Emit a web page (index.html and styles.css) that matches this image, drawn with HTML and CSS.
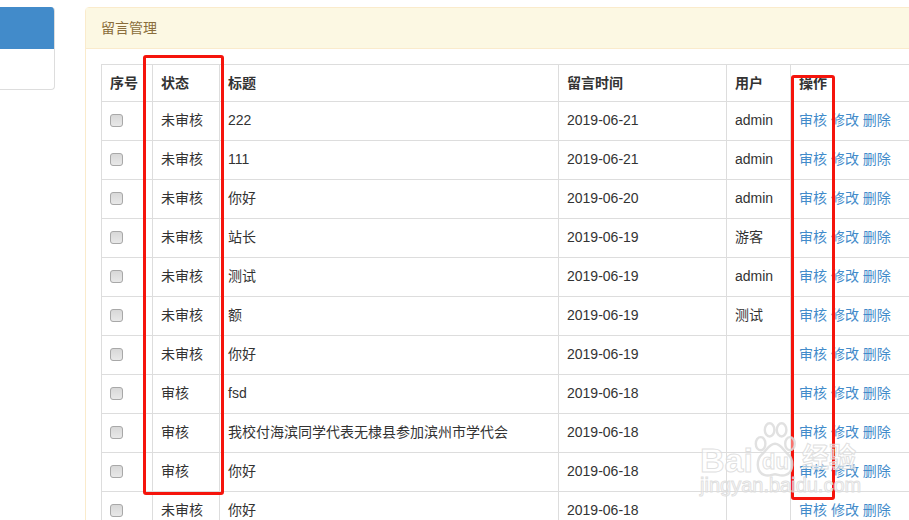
FILE: index.html
```html
<!DOCTYPE html>
<html lang="zh-CN">
<head>
<meta charset="utf-8">
<title>留言管理</title>
<link rel="stylesheet" href="styles.css">
</head>
<body>
<div class="page">
  <aside class="side-panel">
    <div class="side-head"></div>
    <div class="side-body"></div>
  </aside>
  <main class="panel">
    <div class="panel-head">留言管理</div>
    <div class="panel-body">
      <table class="grid">
        <colgroup>
          <col class="c1"><col class="c2"><col class="c3"><col class="c4"><col class="c5"><col class="c6">
        </colgroup>
        <thead>
          <tr><th>序号</th><th>状态</th><th>标题</th><th>留言时间</th><th>用户</th><th>操作</th></tr>
        </thead>
        <tbody>
          <tr><td><input type="checkbox"></td><td>未审核</td><td>222</td><td>2019-06-21</td><td>admin</td><td><a>审核</a> <a>修改</a> <a>删除</a></td></tr>
          <tr><td><input type="checkbox"></td><td>未审核</td><td>111</td><td>2019-06-21</td><td>admin</td><td><a>审核</a> <a>修改</a> <a>删除</a></td></tr>
          <tr><td><input type="checkbox"></td><td>未审核</td><td>你好</td><td>2019-06-20</td><td>admin</td><td><a>审核</a> <a>修改</a> <a>删除</a></td></tr>
          <tr><td><input type="checkbox"></td><td>未审核</td><td>站长</td><td>2019-06-19</td><td>游客</td><td><a>审核</a> <a>修改</a> <a>删除</a></td></tr>
          <tr><td><input type="checkbox"></td><td>未审核</td><td>测试</td><td>2019-06-19</td><td>admin</td><td><a>审核</a> <a>修改</a> <a>删除</a></td></tr>
          <tr><td><input type="checkbox"></td><td>未审核</td><td>额</td><td>2019-06-19</td><td>测试</td><td><a>审核</a> <a>修改</a> <a>删除</a></td></tr>
          <tr><td><input type="checkbox"></td><td>未审核</td><td>你好</td><td>2019-06-19</td><td></td><td><a>审核</a> <a>修改</a> <a>删除</a></td></tr>
          <tr><td><input type="checkbox"></td><td>审核</td><td>fsd</td><td>2019-06-18</td><td></td><td><a>审核</a> <a>修改</a> <a>删除</a></td></tr>
          <tr><td><input type="checkbox"></td><td>审核</td><td>我校付海滨同学代表无棣县参加滨州市学代会</td><td>2019-06-18</td><td></td><td><a>审核</a> <a>修改</a> <a>删除</a></td></tr>
          <tr><td><input type="checkbox"></td><td>审核</td><td>你好</td><td>2019-06-18</td><td></td><td><a>审核</a> <a>修改</a> <a>删除</a></td></tr>
          <tr><td><input type="checkbox"></td><td>未审核</td><td>你好</td><td>2019-06-18</td><td></td><td><a>审核</a> <a>修改</a> <a>删除</a></td></tr>
        </tbody>
      </table>
    </div>
  </main>
</div>
<div class="mark mark-status"></div>
<div class="mark mark-action"></div>
<div class="watermark">
  <svg class="paw" width="42" height="56" viewBox="0 0 70 93" aria-hidden="true">
    <g fill="#fff" fill-opacity=".4" stroke="#dcdcdc" stroke-opacity=".85" stroke-width="4">
      <ellipse cx="11" cy="36" rx="8" ry="11"/>
      <ellipse cx="26" cy="13" rx="8" ry="11"/>
      <ellipse cx="46" cy="13" rx="8" ry="11"/>
      <ellipse cx="60" cy="36" rx="8" ry="11"/>
      <path d="M35 36c-10 0-14 11-22 18-9 8-10 29 4 34 8 3 13-1 18-1s10 4 18 1c14-5 13-26 4-34-8-7-12-18-22-18z"/>
    </g>
  </svg>
  <span class="wm-bai">Bai</span><span class="wm-du">du</span><span class="wm-cn">经验</span>
  <div class="wm-url">jingyan.baidu.com</div>
</div>
</body>
</html>
```

FILE: styles.css
```css
html, body {
  margin: 0;
  height: 520px;
  overflow: hidden;
  background: #fff;
}
body {
  position: relative;
  font: 14px/22px "Liberation Sans", "Noto Sans CJK SC", sans-serif;
  color: #333;
}
.page {
  display: flex;
  align-items: flex-start;
  gap: 30px;
  width: 1240px;
  margin-left: -200px;
  padding-top: 7px;
}
.side-panel {
  flex: 0 0 255px;
  height: 83px;
  box-sizing: border-box;
  border: 1px solid #ddd;
  border-top: 0;
  border-radius: 4px;
  overflow: hidden;
}
.side-head {
  height: 42px;
  background: #428bca;
}
.panel {
  flex: 0 0 955px;
  border: 1px solid #faebcc;
  border-radius: 4px;
  box-sizing: border-box;
}
.panel-head {
  height: 41px;
  box-sizing: border-box;
  padding: 10px 15px;
  line-height: 20px;
  background: #fcf8e3;
  border-bottom: 1px solid #faebcc;
  color: #8a6d3b;
}
.panel-body {
  padding: 15px;
}
.grid {
  border-collapse: collapse;
  table-layout: fixed;
  width: 900px;
}
.c1 { width: 51px; }
.c2 { width: 67px; }
.c3 { width: 339px; }
.c4 { width: 168px; }
.c5 { width: 64px; }
.grid th, .grid td {
  border: 1px solid #ddd;
  text-align: left;
  height: 22px;
  white-space: nowrap;
  vertical-align: middle;
}
.grid td {
  padding: 7px 8px 9px;
}
.grid th {
  padding: 7px 8px;
  font-weight: bold;
}
.grid input {
  appearance: none;
  display: block;
  width: 13px;
  height: 13px;
  margin: 1px 0 0;
  box-sizing: border-box;
  background: linear-gradient(#d8d8d8, #e8e8e8);
  border: 1px solid #a8a8a8;
  border-radius: 3px;
}
.grid a {
  color: #428bca;
}
.mark {
  position: absolute;
  box-sizing: border-box;
  border: 3px solid #f5140c;
  border-radius: 3px;
}
.mark-status {
  left: 143px;
  top: 55px;
  width: 81px;
  height: 440px;
}
.mark-action {
  left: 791px;
  top: 75px;
  width: 44px;
  height: 425px;
}
.watermark {
  position: absolute;
  left: 698px;
  top: 421px;
  width: 190px;
  height: 99px;
  overflow: hidden;
  pointer-events: none;
}
.paw {
  position: absolute;
  left: 56px;
  top: 1px;
}
.wm-bai, .wm-du, .wm-cn, .wm-url {
  position: absolute;
  color: rgba(255, 255, 255, .5);
  -webkit-text-stroke: 1px rgba(218, 218, 218, .85);
}
.wm-bai {
  left: 2px;
  top: 17px;
  font-size: 34px;
  font-weight: bold;
  line-height: 44px;
}
.wm-du {
  left: 64px;
  top: 28px;
  font-size: 22px;
  font-weight: bold;
  line-height: 26px;
}
.wm-cn {
  left: 104px;
  top: 19px;
  font-size: 27px;
  font-weight: bold;
  line-height: 36px;
}
.wm-url {
  left: 2px;
  top: 51px;
  font-size: 20px;
  line-height: 26px;
  white-space: nowrap;
}
```
